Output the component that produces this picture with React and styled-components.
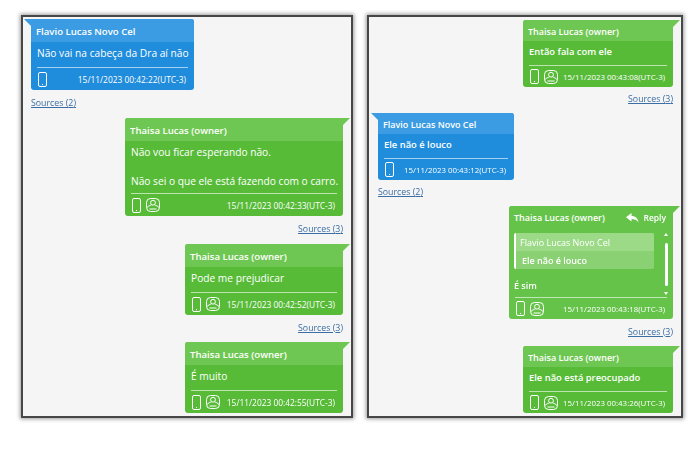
import React from "react";
import styled, { createGlobalStyle } from "styled-components";

const leftPanel = [
	{ side: "in", width: 163, name: "Flavio Lucas Novo Cel", lines: ["Não vai na cabeça da Dra aí não"], time: "15/11/2023 00:42:22(UTC-3)", sources: 2, gap: 28 },
	{ side: "out", width: 218, name: "Thaisa Lucas (owner)", lines: ["Não vou ficar esperando não.", "Não sei o que ele está fazendo com o carro."], time: "15/11/2023 00:42:33(UTC-3)", sources: 3, gap: 28 },
	{ side: "out", width: 158, name: "Thaisa Lucas (owner)", lines: ["Pode me prejudicar"], time: "15/11/2023 00:42:52(UTC-3)", sources: 3, gap: 27 },
	{ side: "out", width: 158, name: "Thaisa Lucas (owner)", lines: ["É muito"], time: "15/11/2023 00:42:55(UTC-3)" },
];

const rightPanel = [
	{ side: "out", width: 150, name: "Thaisa Lucas (owner)", lines: ["Então fala com ele"], time: "15/11/2023 00:43:08(UTC-3)", sources: 3, gap: 26 },
	{ side: "in", width: 136, name: "Flavio Lucas Novo Cel", lines: ["Ele não é louco"], time: "15/11/2023 00:43:12(UTC-3)", sources: 2, gap: 26 },
	{
		side: "out",
		width: 164,
		name: "Thaisa Lucas (owner)",
		reply: { name: "Flavio Lucas Novo Cel", text: "Ele não é louco" },
		lines: ["É sim"],
		time: "15/11/2023 00:43:18(UTC-3)",
		sources: 3,
		gap: 27,
	},
	{ side: "out", width: 150, name: "Thaisa Lucas (owner)", lines: ["Ele não está preocupado"], time: "15/11/2023 00:43:26(UTC-3)" },
];

function PhoneIcon() {
	return (
		<svg width="9" height="15" viewBox="0 0 9 15" fill="none" stroke="#fff" strokeWidth="1">
			<rect x="0.5" y="0.5" width="8" height="14" rx="1.5" />
			<path d="M4 12.500h1" />
		</svg>
	);
}

function ContactIcon() {
	return (
		<svg width="14" height="14" viewBox="0 0 14 14" fill="none" stroke="#fff" strokeWidth="1">
			<rect x="0.5" y="0.5" width="13" height="13" rx="4" />
			<circle cx="7" cy="4.700" r="2.400" />
			<path d="M1 9.500c1.500-1.500 3-2.200 4.300-2.400M13 9.500c-1.500-1.500-3-2.200-4.300-2.400M3.500 11h7" />
		</svg>
	);
}

function ReplyIcon() {
	return (
		<svg width="13" height="10" viewBox="0 0 13 10" fill="#fff">
			<path d="M5.500 0L0 4.300l5.500 4.200V6c3 0 5.200.8 7 3.500C12 5.500 9.500 3 5.500 2.700z" />
		</svg>
	);
}

function Message({ msg }) {
	return (
		<>
			<Bubble $side={msg.side} $width={msg.width} $flat={!!msg.reply}>
				<Head>
					<span>{msg.name}</span>
					{msg.reply && (
						<ReplyLink>
							<ReplyIcon />
							Reply
						</ReplyLink>
					)}
				</Head>
				{msg.reply ? (
					<ReplyBody>
						<ReplyMain>
							<Quote>
								<QuoteName>{msg.reply.name}</QuoteName>
								<QuoteText>{msg.reply.text}</QuoteText>
							</Quote>
							<ReplyText>{msg.lines[0]}</ReplyText>
						</ReplyMain>
						<Scroller>
							<ArrowUp />
							<Thumb />
							<ArrowDown />
						</Scroller>
					</ReplyBody>
				) : (
					<Body>
						{msg.lines.map((line) => (
							<Line key={line}>{line}</Line>
						))}
					</Body>
				)}
				<Footer>
					<Icons>
						<PhoneIcon />
						{msg.side === "out" && <ContactIcon />}
					</Icons>
					<Time>{msg.time}</Time>
				</Footer>
			</Bubble>
			{msg.sources && (
				<SourcesRow $side={msg.side} $height={msg.gap}>
					<SourcesLink>Sources ({msg.sources})</SourcesLink>
				</SourcesRow>
			)}
		</>
	);
}

function App() {
	return (
		<>
			<GlobalStyle />
			<Page>
				<Panel $width={332}>
					{leftPanel.map((msg) => (
						<Message key={msg.time} msg={msg} />
					))}
				</Panel>
				<Panel $width={316} $compact>
					{rightPanel.map((msg) => (
						<Message key={msg.time} msg={msg} />
					))}
				</Panel>
			</Page>
		</>
	);
}

const GlobalStyle = createGlobalStyle`
	* {
		box-sizing: border-box;
	}
	body {
		margin: 0;
		background: #fff;
		font-family: "Open Sans", "Liberation Sans", sans-serif;
	}
`;

const Page = styled.div`
	display: flex;
	gap: 14px;
	width: 700px;
	height: 467px;
	padding: 15px 0 0 21px;
	filter: blur(0.6px);
`;

const Panel = styled.div`
	--head-h: ${(p) => (p.$compact ? "21px" : "23px")};
	--body-h: ${(p) => (p.$compact ? "24px" : "25px")};
	--foot-h: ${(p) => (p.$compact ? "22px" : "23px")};
	--name-size: ${(p) => (p.$compact ? "9px" : "9.6px")};
	--text-size: ${(p) => (p.$compact ? "9.400px" : "10.200px")};
	--text-weight: ${(p) => (p.$compact ? 600 : 500)};
	--time-size: ${(p) => (p.$compact ? "7.900px" : "8.400px")};
	display: flex;
	flex-direction: column;
	width: ${(p) => p.$width}px;
	height: 403px;
	padding: ${(p) => (p.$compact ? "3px 8px 0 9px" : "2px 8px 0 8px")};
	background: #f5f5f5;
	border: 2px solid #474747;
	box-shadow: 0 0 4px 1px rgba(0, 0, 0, 0.4);
	overflow: hidden;
`;

const headColor = (p) => (p.$side === "out" ? "#6fc753" : "#3b9be3");
const bodyColor = (p) => {
	if (p.$flat) return "#66c34a";
	return p.$side === "out" ? "#57bb38" : "#1f8cdc";
};

const Bubble = styled.div`
	position: relative;
	flex: none;
	align-self: ${(p) => (p.$side === "out" ? "flex-end" : "flex-start")};
	width: ${(p) => p.$width}px;
	background: ${bodyColor};
	border-radius: ${(p) => (p.$side === "out" ? "3px 0 3px 3px" : "0 3px 3px 3px")};
	color: #fff;
	--head-bg: ${(p) => (p.$flat ? "#66c34a" : headColor(p))};

	/* the little tail at the top corner */
	&::before {
		content: "";
		position: absolute;
		top: 0;
		${(p) => (p.$side === "out" ? "left: 100%;" : "right: 100%;")}
		width: 7px;
		height: 7px;
		background: var(--head-bg);
		clip-path: ${(p) =>
			p.$side === "out" ? "polygon(0 0, 100% 0, 0 100%)" : "polygon(0 0, 100% 0, 100% 100%)"};
	}
`;

const Head = styled.div`
	display: flex;
	align-items: center;
	justify-content: space-between;
	height: var(--head-h);
	padding: 2px 7px 0 5px;
	background: var(--head-bg);
	border-radius: inherit;
	border-bottom-left-radius: 0;
	border-bottom-right-radius: 0;
	font-size: var(--name-size);
	font-weight: 600;
`;

const ReplyLink = styled.span`
	display: flex;
	align-items: center;
	gap: 4px;
	font-size: 8.500px;
`;

const Body = styled.div`
	display: flex;
	flex-direction: column;
	gap: 15px;
	min-height: var(--body-h);
	padding: 4px 6px 5px;
`;

const Line = styled.div`
	font-size: var(--text-size);
	line-height: 14px;
	font-weight: var(--text-weight);
	white-space: nowrap;
`;

const ReplyBody = styled.div`
	display: flex;
	height: 70px;
	padding: 6px 0 0 5px;
`;

const ReplyMain = styled.div`
	flex: none;
	display: flex;
	flex-direction: column;
	width: 140px;
`;

const Quote = styled.div`
	background: #8ad173;
	border-left: 2px solid #fff;
	border-radius: 2px;
	font-size: 9px;
	font-weight: 500;
`;

const QuoteName = styled.div`
	height: 18px;
	padding: 0 4px;
	line-height: 19px;
	background: #9cda88;
	border-radius: 2px 2px 0 0;
`;

const QuoteText = styled.div`
	height: 18px;
	padding: 0 6px;
	line-height: 19px;
	font-weight: 600;
`;

const ReplyText = styled.div`
	margin-top: 10px;
	font-size: 9px;
	line-height: 14px;
	font-weight: 600;
`;

const Scroller = styled.div`
	flex: none;
	display: flex;
	flex-direction: column;
	align-items: center;
	justify-content: space-between;
	width: 14px;
	height: 62px;
	margin-left: 5px;
`;

const ArrowUp = styled.div`
	border: 2.5px solid transparent;
	border-top: 0;
	border-bottom: 3px solid #fff;
`;

const ArrowDown = styled.div`
	border: 2.5px solid transparent;
	border-bottom: 0;
	border-top: 3px solid #fff;
`;

const Thumb = styled.div`
	width: 3px;
	height: 43px;
	background: #fff;
	border-radius: 2px;
`;

const Footer = styled.div`
	display: flex;
	align-items: center;
	justify-content: space-between;
	height: var(--foot-h);
	margin: 0 6px;
	padding: 0 2px 0 1px;
	border-top: 1px solid rgba(255, 255, 255, 0.6);
`;

const Icons = styled.div`
	display: flex;
	align-items: center;
	gap: 5px;
`;

const Time = styled.span`
	font-size: var(--time-size);
	white-space: nowrap;
`;

const SourcesRow = styled.div`
	flex: none;
	display: flex;
	align-items: center;
	justify-content: ${(p) => (p.$side === "out" ? "flex-end" : "flex-start")};
	height: ${(p) => p.$height}px;
	padding-bottom: 2px;
`;

const SourcesLink = styled.a`
	font-size: 8.800px;
	color: #3b6ea5;
	text-decoration: underline;
`;

export default App;
